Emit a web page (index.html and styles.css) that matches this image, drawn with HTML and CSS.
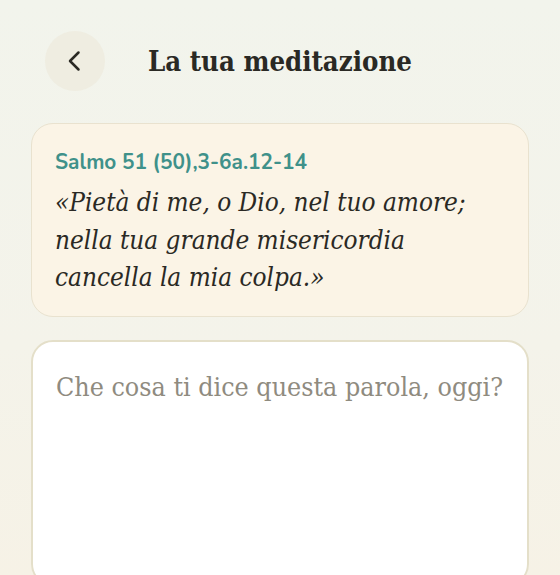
FILE: index.html
```html
<!DOCTYPE html>
<html lang="it">
<head>
<meta charset="utf-8">
<link rel="stylesheet" href="styles.css">
</head>
<body>
<div class="page">
  <header class="header">
    <button class="back" aria-label="Indietro">
      <svg width="24" height="24" viewBox="0 0 24 24" fill="none" stroke="#2b2a24" stroke-width="2.5" stroke-linecap="round" stroke-linejoin="round"><path d="M15.5 3.5 L7 12 L15.5 20.5"/></svg>
    </button>
    <h1 class="title">La tua meditazione</h1>
  </header>
  <section class="verse">
    <div class="ref">Salmo 51 (50),3-6a.12-14</div>
    <p class="quote">«Pietà di me, o Dio, nel tuo amore;<br>nella tua grande misericordia<br>cancella la mia colpa.»</p>
  </section>
  <section class="note">
    <div class="placeholder">Che cosa ti dice questa parola, oggi?</div>
  </section>
</div>
</body>
</html>
```
FILE: styles.css
```css
html, body {
  margin: 0;
  padding: 0;
}
body {
  width: 560px;
  height: 575px;
  overflow: hidden;
  background: linear-gradient(180deg, #f2f4ec 0%, #f4f3ea 60%, #f6f2e6 100%);
}
.page {
  padding: 31px 31px 0 31px;
  display: flex;
  flex-direction: column;
}
.header {
  display: flex;
  align-items: center;
  padding-left: 14px;
  height: 60px;
  gap: 43px;
}
.back {
  width: 60px;
  height: 60px;
  border-radius: 50%;
  border: none;
  background: #efede1;
  display: flex;
  align-items: center;
  justify-content: center;
  padding: 0;
}
.title {
  margin: 0;
  font-family: "DejaVu Serif", serif;
  font-stretch: condensed;
  font-weight: bold;
  font-size: 27.3px;
  color: #2a2924;
}
.verse {
  margin-top: 32px;
  background: #fbf4e6;
  border: 1.5px solid #e9e2cf;
  border-radius: 22px;
  padding: 25px 23px 19px 23px;
}
.ref {
  font-family: "Nunito", "Lato", "Noto Sans", sans-serif;
  font-weight: 700;
  font-size: 20.8px;
  color: #3f918a;
  line-height: 26px;
}
.quote {
  margin: 9px 0 0 0;
  font-family: "DejaVu Serif", serif;
  font-stretch: condensed;
  font-style: italic;
  font-size: 25.9px;
  line-height: 37.5px;
  color: #2a2924;
}
.note {
  margin-top: 23px;
  background: #ffffff;
  border: 2px solid #e4dfc9;
  border-radius: 22px;
  padding: 28px 23px 24px 23px;
  height: 190px;
}
.placeholder {
  font-family: "DejaVu Serif", serif;
  font-stretch: condensed;
  font-size: 26.6px;
  color: #8f8b7f;
  line-height: 34px;
  white-space: nowrap;
}
```
